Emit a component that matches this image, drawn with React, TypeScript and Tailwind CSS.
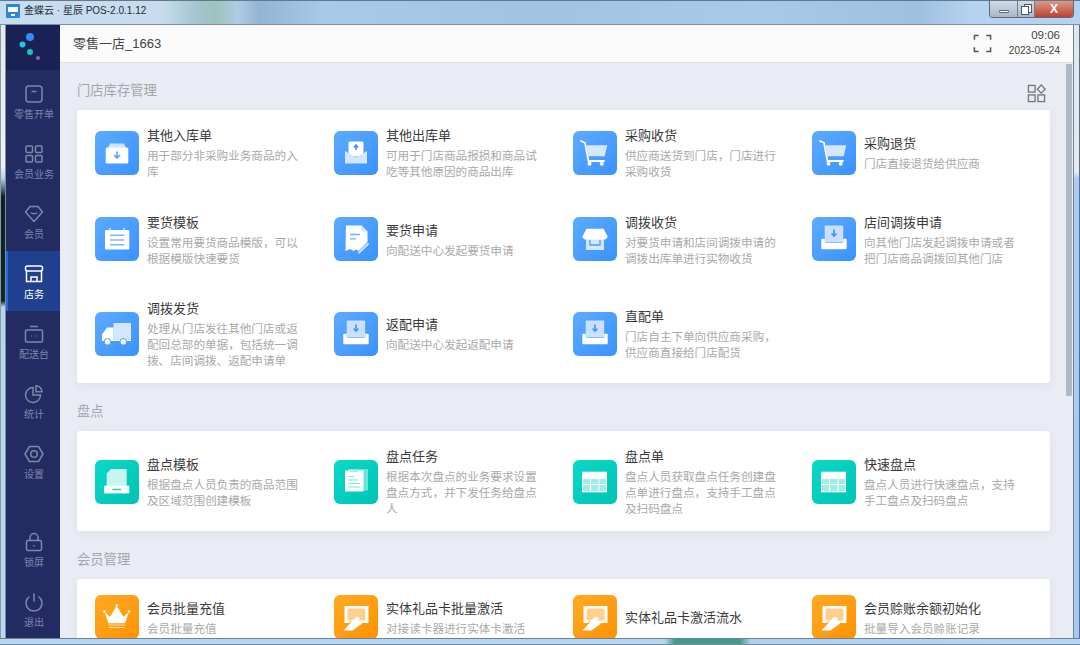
import type { ReactNode } from "react";

const BLUE = "bg-gradient-to-br from-[#5cabff] to-[#3b92ff]";
const TEAL = "bg-gradient-to-br from-[#0bd9c8] to-[#00c3b3]";
const ORANGE = "bg-gradient-to-br from-[#ffaa20] to-[#ff9200]";

/* tile icons, all on a 44 unit box */
const BoxIn = (
  <>
    <path d="M13 17l2-4.500h14l2 4.500z" fill="#cfe4ff" />
    <rect x="10.700" y="16.500" width="22.600" height="16" rx="1.500" fill="#fff" />
    <path d="M22 20.500v6M19 24l3 3 3-3" stroke="#4a9dff" strokeWidth="1.500" fill="none" />
  </>
);
const MailOut = (
  <>
    <rect x="14.500" y="10.500" width="15" height="15" rx="1.500" fill="#fff" />
    <path d="M22 19v-4.500M20 16.500l2-2.500 2 2.500" stroke="#3f95ff" strokeWidth="1.600" fill="none" />
    <path d="M11 20l11 6.500L33 20v12.500H11z" fill="#d5e7ff" />
  </>
);
const Cart = (
  <>
    <path d="M8 10l4 1.800L15.500 30H31" stroke="#fff" strokeWidth="1.800" fill="none" strokeLinecap="round" />
    <path d="M12.700 14.300h21.600l-2.600 11H15z" fill="#d5e7ff" />
    <circle cx="16.500" cy="32.700" r="2" fill="#fff" />
    <circle cx="28.700" cy="32.700" r="2" fill="#fff" />
  </>
);
const Calendar = (
  <>
    <rect x="10" y="13" width="24.300" height="19.500" rx="1" fill="#fff" />
    <path d="M15 11v3M29 11v3" stroke="#d5e7ff" strokeWidth="1.400" />
    <path d="M15 18.300h14.300M15 23h14.300M15 27.700h14.300" stroke="#7db8ff" strokeWidth="1.400" />
  </>
);
const Doc = (
  <>
    <path d="M12 8.500h15.500l6 6V25l-9 9-2-1.500-3 1.500-3-2-5 2z" fill="#fff" />
    <path d="M27.500 8.500v6h6z" fill="#cfe4ff" />
    <path d="M16 17.500h10M16 21.800h6" stroke="#6fb0ff" strokeWidth="1.300" />
    <path d="M25 35.500l9-8.500" stroke="#cfe4ff" strokeWidth="2" strokeLinecap="round" />
  </>
);
const Store = (
  <>
    <path d="M13 20h18v13H13z" fill="#d5e7ff" />
    <path d="M17 23v5h10v-5" stroke="#4a9dff" strokeWidth="1.300" fill="none" />
    <path d="M13.500 11.700h17l4 7.500c0 2.500-2 3.300-3.500 3.300h-18c-1.500 0-3.500-.8-3.500-3.300z" fill="#fff" />
  </>
);
const Tray = (
  <>
    <rect x="12.700" y="8.500" width="18.500" height="17" rx="1" fill="#c9e0ff" />
    <path d="M22 12.500v6M19.500 16.500l2.500 2.600 2.500-2.600" stroke="#3f95ff" strokeWidth="1.600" fill="none" />
    <path d="M9.300 22.500c0-.5.300-.8.800-.8h2.600v2.500c0 1 .8 1.800 1.800 1.800h15c1 0 1.800-.8 1.800-1.800v-2.500h2.600c.5 0 .8.300.8.800v8.500c0 .8-.5 1.300-1.300 1.300H10.600c-.8 0-1.300-.5-1.300-1.300z" fill="#fff" />
  </>
);
const Truck = (
  <>
    <rect x="18.500" y="11" width="17.500" height="16.500" fill="#d5e7ff" />
    <path d="M18.500 15.500h-6.500l-5 7V29H36v-1.500H18.500z" fill="#fff" />
    <circle cx="12.500" cy="29.800" r="3.300" fill="#fff" stroke="#4a9dff" strokeWidth="1" />
    <circle cx="28.300" cy="29.800" r="3.300" fill="#fff" stroke="#4a9dff" strokeWidth="1" />
  </>
);
const Template = (
  <>
    <path d="M16 9h15.700v17H11.700V13.500z" fill="#c8f5f0" />
    <rect x="9" y="25.700" width="25.300" height="7.700" fill="#fff" />
    <rect x="17.500" y="28.800" width="8.500" height="1.400" fill="#19cdbe" />
  </>
);
const Clipboard = (
  <>
    <rect x="14" y="9" width="20" height="21.500" fill="#6fe4da" />
    <rect x="11" y="10.500" width="18.500" height="21" fill="#fff" />
    <rect x="16" y="9.500" width="8.500" height="2.600" fill="#a5f0e9" />
    <path d="M14 16.500h6M14 20h10M14 23.500h12M14 27h12" stroke="#7beadf" strokeWidth="1.100" />
  </>
);
const Table = (
  <>
    <rect x="9" y="11.700" width="25" height="20.600" fill="#fff" />
    <path d="M10 19h7v5h-7zM18 19h7.500v5H18zM26.500 19H33v5h-6.500zM10 25h7v6h-7zM18 25h7.500v6H18zM26.500 25H33v6h-6.500z" fill="#9ceee6" />
  </>
);
const Crown = (
  <>
    <path d="M9.500 16.700l5.500 5 6.700-11 6.700 11 5.600-5-4 11.600H13.500z" fill="#fff" />
    <circle cx="9.500" cy="16.500" r="1.200" fill="#fff" />
    <circle cx="21.700" cy="10.500" r="1.200" fill="#fff" />
    <circle cx="34" cy="16.500" r="1.200" fill="#fff" />
    <path d="M13.500 30h16.500M14 32.500h15.500" stroke="#ffdca8" strokeWidth="1.200" />
  </>
);
const Hand = (
  <>
    <rect x="10.500" y="11" width="24" height="17" rx="0.500" fill="#fff" />
    <rect x="13.500" y="13.500" width="18" height="12" rx="2" fill="#ffcf8f" />
    <path d="M9.500 35.500l9-10 4-4 3.500 2-3 4 6-1-1.500 2.500-9 6.500z" fill="#fff" />
    <path d="M9 35l8-9" stroke="#ff9c10" strokeWidth="1" />
  </>
);

type Item = { icon: ReactNode; title: string; desc?: string };

const sections: { name: string; tone: string; items: Item[] }[] = [
  {
    name: "门店库存管理",
    tone: BLUE,
    items: [
      { icon: BoxIn, title: "其他入库单", desc: "用于部分非采购业务商品的入库" },
      { icon: MailOut, title: "其他出库单", desc: "可用于门店商品报损和商品试吃等其他原因的商品出库" },
      { icon: Cart, title: "采购收货", desc: "供应商送货到门店，门店进行采购收货" },
      { icon: Cart, title: "采购退货", desc: "门店直接退货给供应商" },
      { icon: Calendar, title: "要货模板", desc: "设置常用要货商品模版，可以根据模版快速要货" },
      { icon: Doc, title: "要货申请", desc: "向配送中心发起要货申请" },
      { icon: Store, title: "调拨收货", desc: "对要货申请和店间调拨申请的调拨出库单进行实物收货" },
      { icon: Tray, title: "店间调拨申请", desc: "向其他门店发起调拨申请或者把门店商品调拨回其他门店" },
      { icon: Truck, title: "调拨发货", desc: "处理从门店发往其他门店或返配回总部的单据，包括统一调拨、店间调拨、返配申请单" },
      { icon: Tray, title: "返配申请", desc: "向配送中心发起返配申请" },
      { icon: Tray, title: "直配单", desc: "门店自主下单向供应商采购，供应商直接给门店配货" },
    ],
  },
  {
    name: "盘点",
    tone: TEAL,
    items: [
      { icon: Template, title: "盘点模板", desc: "根据盘点人员负责的商品范围及区域范围创建模板" },
      { icon: Clipboard, title: "盘点任务", desc: "根据本次盘点的业务要求设置盘点方式，并下发任务给盘点人" },
      { icon: Table, title: "盘点单", desc: "盘点人员获取盘点任务创建盘点单进行盘点，支持手工盘点及扫码盘点" },
      { icon: Table, title: "快速盘点", desc: "盘点人员进行快速盘点，支持手工盘点及扫码盘点" },
    ],
  },
  {
    name: "会员管理",
    tone: ORANGE,
    items: [
      { icon: Crown, title: "会员批量充值", desc: "会员批量充值" },
      { icon: Hand, title: "实体礼品卡批量激活", desc: "对接读卡器进行实体卡激活" },
      { icon: Hand, title: "实体礼品卡激活流水" },
      { icon: Hand, title: "会员赊账余额初始化", desc: "批量导入会员赊账记录" },
    ],
  },
];

const navTop: { label: string; icon: ReactNode; active?: boolean }[] = [
  { label: "零售开单", icon: <><rect x="4" y="4" width="16" height="16" rx="3" /><path d="M9.500 9.500h5" /></> },
  { label: "会员业务", icon: <><rect x="4" y="4" width="6.500" height="6.500" rx="1" /><rect x="13.500" y="4" width="6.500" height="6.500" rx="1" /><rect x="4" y="13.500" width="6.500" height="6.500" rx="1" /><rect x="13.500" y="13.500" width="6.500" height="6.500" rx="1" /></> },
  { label: "会员", icon: <><path d="M8 4.500h8l4.500 5.500L12 19.500 3.500 10z" strokeLinejoin="round" /><path d="M9 10.500c1 1.800 5 1.800 6 0" /></> },
  { label: "店务", active: true, icon: <><rect x="3.500" y="4" width="17" height="5" rx="2" /><path d="M4.500 9v10.500h15V9M9 19v-4h6v4" /></> },
  { label: "配送台", icon: <><path d="M8 4.500h8" /><rect x="3.500" y="8" width="17" height="12" rx="1" /><path d="M9 14h.5M14.500 14h.5" strokeWidth="2" /></> },
  { label: "统计", icon: <><path d="M11 5.500a7.500 7.500 0 1 0 7.500 7.500H11z" /><path d="M14 3.800a6 6 0 0 1 6 6h-6z" /></> },
  { label: "设置", icon: <><path d="M7.500 4.500h9L21 12l-4.500 7.500h-9L3 12z" strokeLinejoin="round" /><circle cx="12" cy="12" r="3.300" /></> },
];

const navBottom: { label: string; icon: ReactNode }[] = [
  { label: "锁屏", icon: <><rect x="4.500" y="10.500" width="15" height="10" rx="1.500" /><path d="M8 10.500V7.500a4 4 0 0 1 8 0v3M12 15v1.500" /></> },
  { label: "退出", icon: <><path d="M12 3.500v8" /><path d="M7.500 6.500a8 8 0 1 0 9 0" /></> },
];

function NavItem({ label, icon, active }: { label: string; icon: ReactNode; active?: boolean }) {
  return (
    <div
      className={`flex h-[60px] flex-col items-center justify-center border-l-2 pt-[1px] ${
        active ? "border-[#2a66dc] bg-[#20408f] text-white" : "border-transparent text-[#7f86aa]"
      }`}
    >
      <svg viewBox="0 0 24 24" className="h-6 w-6" fill="none" stroke="currentColor" strokeWidth="1.500">
        {icon}
      </svg>
      <span className="mt-[2px] text-[10px] leading-[14px]">{label}</span>
    </div>
  );
}

function Tile({ item, tone }: { item: Item; tone: string }) {
  return (
    <div className="flex items-center">
      <div className={`h-[44px] w-[44px] shrink-0 rounded-[6px] ${tone}`}>
        <svg viewBox="0 0 44 44" className="h-full w-full">
          {item.icon}
        </svg>
      </div>
      <div className="ml-[8px] w-[153px] translate-y-[1px]">
        <div className="text-[13px] leading-[18px] text-[#3a3a3a]">{item.title}</div>
        {item.desc && <p className="mt-[3px] text-[11.6px] leading-[16px] text-[#a9a9a9]">{item.desc}</p>}
      </div>
    </div>
  );
}

export default function App() {
  return (
    <div className="flex h-[645px] w-[1080px] flex-col overflow-hidden bg-[#b9d7f3] font-['Liberation_Sans','Noto_Sans_CJK_SC',sans-serif]">
      {/* title bar */}
      <div className="flex h-[25px] shrink-0 items-start justify-between border-b border-t border-b-[#7f8fa3] border-t-[#66778a] bg-[linear-gradient(90deg,#c6dcf0_0%,#c8dcee_15%,#a4c6d2_18%,#9cc4bc_20%,#b0cce4_22%,#93b4d2_24%,#a9c9e8_30%,#a2c3e2_50%,#a9c9e8_70%,#9fc0e0_85%,#b5d3f0_90%,#b5d3f0_100%)] pl-[6px] pr-[6px]">
        <div className="flex items-center pt-[3px]">
          <div className="flex h-[14px] w-[14px] flex-col overflow-hidden rounded-[1px] bg-[#2f86d8]">
            <div className="mx-[2px] mt-[3px] h-[5px] bg-white" />
            <div className="mx-auto mt-[2px] h-[2px] w-[4px] bg-white" />
          </div>
          <span className="ml-[4px] text-[10px] leading-[14px] text-[#1f2b38]">金蝶云 · 星辰 POS-2.0.1.12</span>
        </div>
        <div className="flex h-[17px] overflow-hidden rounded-b-[4px] border border-t-0 border-[#5c6b7c]">
          <div className="flex w-[28px] items-center justify-center border-r border-[#6f7e90] bg-gradient-to-b from-[#cfdcea] to-[#a8b8c8]">
            <div className="mt-[4px] h-[3px] w-[10px] rounded-[1px] border border-[#59646f] bg-white" />
          </div>
          <div className="flex w-[17px] items-center justify-center border-r border-[#6f7e90] bg-gradient-to-b from-[#cfdcea] to-[#a8b8c8]">
            <svg viewBox="0 0 11 11" className="h-[11px] w-[11px]" fill="#fff" stroke="#4d5864" strokeWidth="1">
              <rect x="3.500" y="0.500" width="7" height="8" />
              <rect x="0.500" y="2.500" width="7" height="8" />
            </svg>
          </div>
          <div className="flex w-[38px] items-center justify-center bg-gradient-to-b from-[#d9998c] to-[#bf3d2c] text-[12px] font-bold leading-none text-white">
            X
          </div>
        </div>
      </div>

      <div className="flex min-h-0 flex-1">
        <div className="w-[6px] shrink-0 border-l border-r border-l-[#8b98a6] border-r-[#7f8d9c] bg-[linear-gradient(180deg,#e4e9ee_0%,#eef2f6_23%,#b6d2ee_25%,#0f1f24_28%,#0c2a28_45%,#b5d5f5_46%,#b9d9f7_100%)]" />

        {/* client area */}
        <div className="flex min-w-0 flex-1 border-r border-[#6f8093]">
          <aside className="flex w-[54px] shrink-0 flex-col bg-[#222c63]">
            <div className="h-[45px] shrink-0 bg-[#1a2154]">
              <svg viewBox="0 0 54 45" className="h-[45px] w-[54px]">
                <circle cx="24" cy="12" r="4" fill="#2f8df5" />
                <circle cx="16.500" cy="19.500" r="3" fill="#1ec8e8" />
                <circle cx="24" cy="27" r="3" fill="#11c9b8" />
                <circle cx="32" cy="33" r="2" fill="#8b5ddb" />
              </svg>
            </div>
            <nav className="flex flex-1 flex-col">
              <div className="mt-[1px] flex flex-col">
                {navTop.map((n) => (
                  <NavItem key={n.label} {...n} />
                ))}
              </div>
              <div className="mb-[-1px] mt-auto flex flex-col">
                {navBottom.map((n) => (
                  <NavItem key={n.label} {...n} />
                ))}
              </div>
            </nav>
          </aside>

          <div className="flex min-w-0 flex-1 flex-col">
            <header className="flex h-[38px] shrink-0 items-center justify-between border-b border-[#e0e0e2] bg-[#fbfbfb] pl-[13px] pr-[13px]">
              <span className="text-[13px] text-[#444]">零售一店_1663</span>
              <div className="flex items-center">
                <svg viewBox="0 0 20 20" className="mr-[17px] h-[19px] w-[19px]" fill="none" stroke="#555" strokeWidth="1.600">
                  <path d="M1.500 6V1.500H6M14 1.500h4.500V6M18.500 14v4.500H14M6 18.500H1.500V14" />
                </svg>
                <div className="text-right text-[#444]">
                  <div className="text-[11.500px] leading-[15px]">09:06</div>
                  <div className="text-[10px] leading-[16px]">2023-05-24</div>
                </div>
              </div>
            </header>

            <div className="flex min-h-0 flex-1 bg-[#e9ecf4]">
              <main className="min-w-0 flex-1 overflow-hidden pl-[17px] pr-[16px] pt-[17px]">
                {sections.map((s, i) => (
                  <section key={s.name} className="mb-[18px]">
                    <div className="mb-[10px] flex h-[20px] items-center justify-between">
                      <h2 className="pt-[1px] text-[13.300px] leading-[20px] text-[#a3a6ac]">{s.name}</h2>
                      {i === 0 && (
                        <svg viewBox="0 0 20 20" className="mr-[4px] mt-[6px] h-[19px] w-[19px]" fill="none" stroke="#777" strokeWidth="1.400">
                          <rect x="1.500" y="1.500" width="7" height="7" />
                          <path d="M15 .9l4.100 4.600-4.100 4.100-4.100-4.100z" />
                          <rect x="1.500" y="11.500" width="7" height="7" />
                          <rect x="11.500" y="11.500" width="7" height="7" />
                        </svg>
                      )}
                    </div>
                    <div className="grid grid-cols-[239px_239px_239px_1fr] gap-y-[33.500px] rounded-[3px] bg-white pb-[15px] pl-[18px] pt-[16px] shadow-[0_2px_10px_rgba(70,80,130,0.08)]">
                      {s.items.map((item) => (
                        <Tile key={item.title} item={item} tone={s.tone} />
                      ))}
                    </div>
                  </section>
                ))}
              </main>
              <div className="w-[7px] shrink-0 pr-[1px] pt-[1px]">
                <div className="h-[332px] w-[6px] rounded-[1px] bg-[#aeb8c6]" />
              </div>
            </div>
          </div>
        </div>

        <div className="w-[6px] shrink-0 border-r border-[#5f6e7d] bg-[linear-gradient(180deg,#dfe6ee_0%,#e6ebf1_24%,#a9cdf2_25%,#a5c9ef_100%)]" />
      </div>

      {/* bottom frame */}
      <div className="h-[7px] shrink-0 border-b border-t border-b-[#7c8a99] border-t-[#6f8093] bg-[linear-gradient(90deg,#b7d6f4_0%,#b7d6f4_61.500%,#3f9c86_62.500%,#3f9c86_68.500%,#b0d0f0_69.500%,#b7d6f4_100%)]" />
    </div>
  );
}
